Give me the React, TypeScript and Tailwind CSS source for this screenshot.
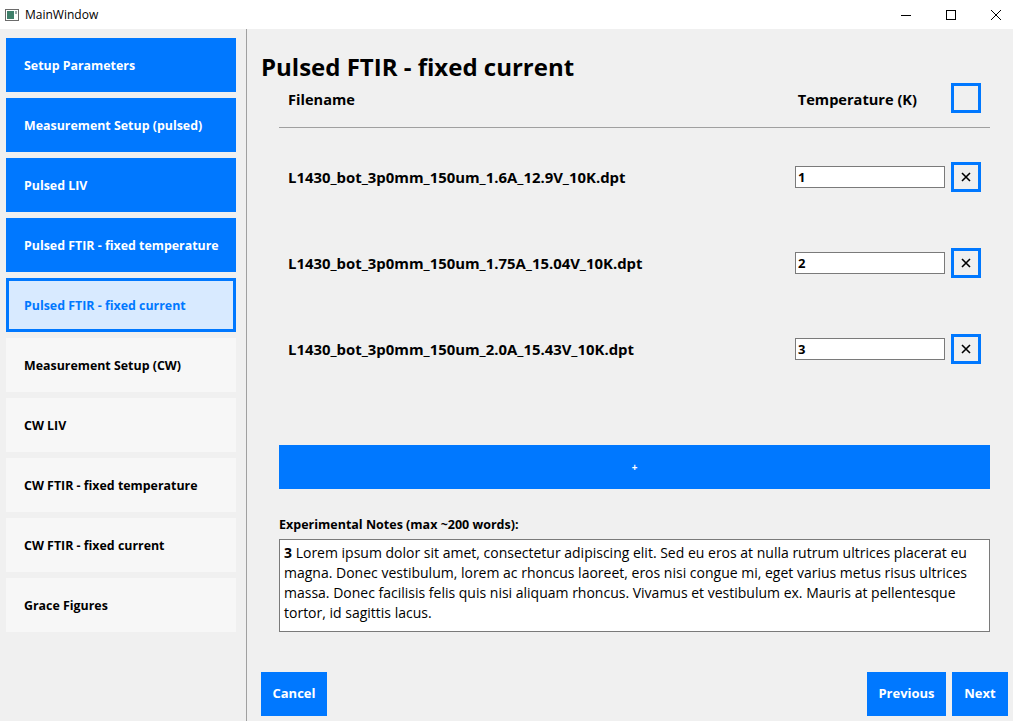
import { useState } from "react";

const navItems = [
  "Setup Parameters",
  "Measurement Setup (pulsed)",
  "Pulsed LIV",
  "Pulsed FTIR - fixed temperature",
  "Pulsed FTIR - fixed current",
  "Measurement Setup (CW)",
  "CW LIV",
  "CW FTIR - fixed temperature",
  "CW FTIR - fixed current",
  "Grace Figures",
];

const files = [
  { name: "L1430_bot_3p0mm_150um_1.6A_12.9V_10K.dpt", temp: "1" },
  { name: "L1430_bot_3p0mm_150um_1.75A_15.04V_10K.dpt", temp: "2" },
  { name: "L1430_bot_3p0mm_150um_2.0A_15.43V_10K.dpt", temp: "3" },
];

const noteLines = [
  "Lorem ipsum dolor sit amet, consectetur adipiscing elit. Sed eu eros at nulla rutrum ultrices placerat eu",
  "magna. Donec vestibulum, lorem ac rhoncus laoreet, eros nisi congue mi, eget varius metus risus ultrices",
  "massa. Donec facilisis felis quis nisi aliquam rhoncus. Vivamus et vestibulum ex. Mauris at pellentesque",
  "tortor, id sagittis lacus.",
];

const font = { fontFamily: '"Open Sans", "Noto Sans", sans-serif' };

const TitleBar = () => (
  <div className="flex h-[29px] items-center bg-white text-[12px] text-black">
    <svg width="16" height="16" viewBox="0 0 16 16" className="ml-[4px] mr-[5px]">
      <rect x="1.5" y="2.5" width="13" height="11" fill="#fff" stroke="#6b6b6b" />
      <rect x="3" y="4" width="7" height="8" fill="#3f7f6a" />
      <rect x="11" y="4" width="2" height="3" fill="#9aa" />
    </svg>
    <span>MainWindow</span>
    <div className="ml-auto flex items-center gap-[35px] pr-[12px]">
      <svg width="10" height="10" viewBox="0 0 10 10">
        <path d="M0 5.5h10" stroke="#000" strokeWidth="1" />
      </svg>
      <svg width="10" height="10" viewBox="0 0 10 10">
        <rect x="0.5" y="0.5" width="9" height="9" fill="none" stroke="#000" />
      </svg>
      <svg width="10" height="10" viewBox="0 0 10 10">
        <path d="M0 0l10 10M10 0l-10 10" stroke="#000" strokeWidth="1" />
      </svg>
    </div>
  </div>
);

const Sidebar = ({ active, onSelect }: { active: number; onSelect: (i: number) => void }) => (
  <div className="flex w-[247px] shrink-0 flex-col gap-[6px] border-r border-[#a0a0a0] pl-[6px] pr-[10px] pt-[9px]">
    {navItems.map((item, i) => {
      const done = i < active;
      const isActive = i === active;
      return (
        <button
          key={item}
          onClick={() => onSelect(i)}
          className={
            "flex h-[54px] items-center pt-[2px] text-left text-[12.4px] font-bold " +
            (isActive
              ? "border-[3px] border-[#0078ff] bg-[#d8eaff] pl-[15px] text-[#0078ff]"
              : done
                ? "bg-[#0078ff] pl-[18px] text-white"
                : "bg-[#f7f7f7] pl-[18px] text-black")
          }
        >
          {item}
        </button>
      );
    })}
  </div>
);

const App = () => {
  const [active, setActive] = useState(4);

  return (
    <div className="flex h-[721px] w-[1013px] flex-col overflow-hidden bg-[#f0f0f0]" style={font}>
      <TitleBar />
      <div className="flex flex-1">
        <Sidebar active={active} onSelect={setActive} />

        <div className="flex flex-1 flex-col pl-[14px] pr-[5px]">
          <h1 className="mt-[24px] text-[24px] font-bold leading-[28px] text-black">
            Pulsed FTIR - fixed current
          </h1>

          <div className="ml-[18px] mr-[18px] flex flex-col">
            <div className="flex h-[47px] items-center border-b border-[#a0a0a0] pb-[12px]">
              <span className="ml-[9px] pt-[3px] text-[14.6px] font-bold">Filename</span>
              <span className="ml-auto pt-[3px] text-[14.6px] font-bold">Temperature (K)</span>
              <div className="ml-[34px] mr-[9px] h-[30px] w-[30px] border-[3px] border-[#0078ff]" />
            </div>

            {files.map((f) => (
              <div key={f.name} className="flex h-[86px] items-center pt-[12px]">
                <span className="ml-[9px] text-[14.9px] font-bold">{f.name}</span>
                <input
                  defaultValue={f.temp}
                  className="ml-auto h-[22px] w-[150px] border border-[#7a7a7a] bg-white px-[2px] text-[13px] font-bold outline-none"
                />
                <button className="ml-[6px] mr-[9px] flex h-[30px] w-[30px] items-center justify-center border-[3px] border-[#0078ff] bg-[#f0f0f0]">
                  <svg width="10" height="10" viewBox="0 0 10 10">
                    <path d="M1 1l8 8M9 1l-8 8" stroke="#000" strokeWidth="1.6" />
                  </svg>
                </button>
              </div>
            ))}

            <button className="mt-[59px] flex h-[44px] items-center justify-center bg-[#0078ff] text-[10px] font-bold text-white">
              +
            </button>

            <label className="mt-[27px] text-[12.5px] font-bold leading-[17px] text-black">
              Experimental Notes (max ~200 words):
            </label>
            <div className="mt-[6px] h-[93px] border border-[#7a7a7a] bg-white pl-[4px] pt-[3px] text-[14px] leading-[20px] text-black">
              {noteLines.map((l, i) => (
                <div key={i} className="whitespace-nowrap">
                  {i === 0 && <b>3 </b>}
                  {l}
                </div>
              ))}
            </div>
          </div>

          <div className="mt-auto mb-[5px] flex gap-[6px]">
            <button className="h-[44px] w-[66px] bg-[#0078ff] text-[13px] font-bold text-white">Cancel</button>
            <button className="ml-auto h-[44px] w-[79px] bg-[#0078ff] text-[13px] font-bold text-white">
              Previous
            </button>
            <button className="h-[44px] w-[56px] bg-[#0078ff] text-[13px] font-bold text-white">Next</button>
          </div>
        </div>
      </div>
    </div>
  );
};

export default App;
